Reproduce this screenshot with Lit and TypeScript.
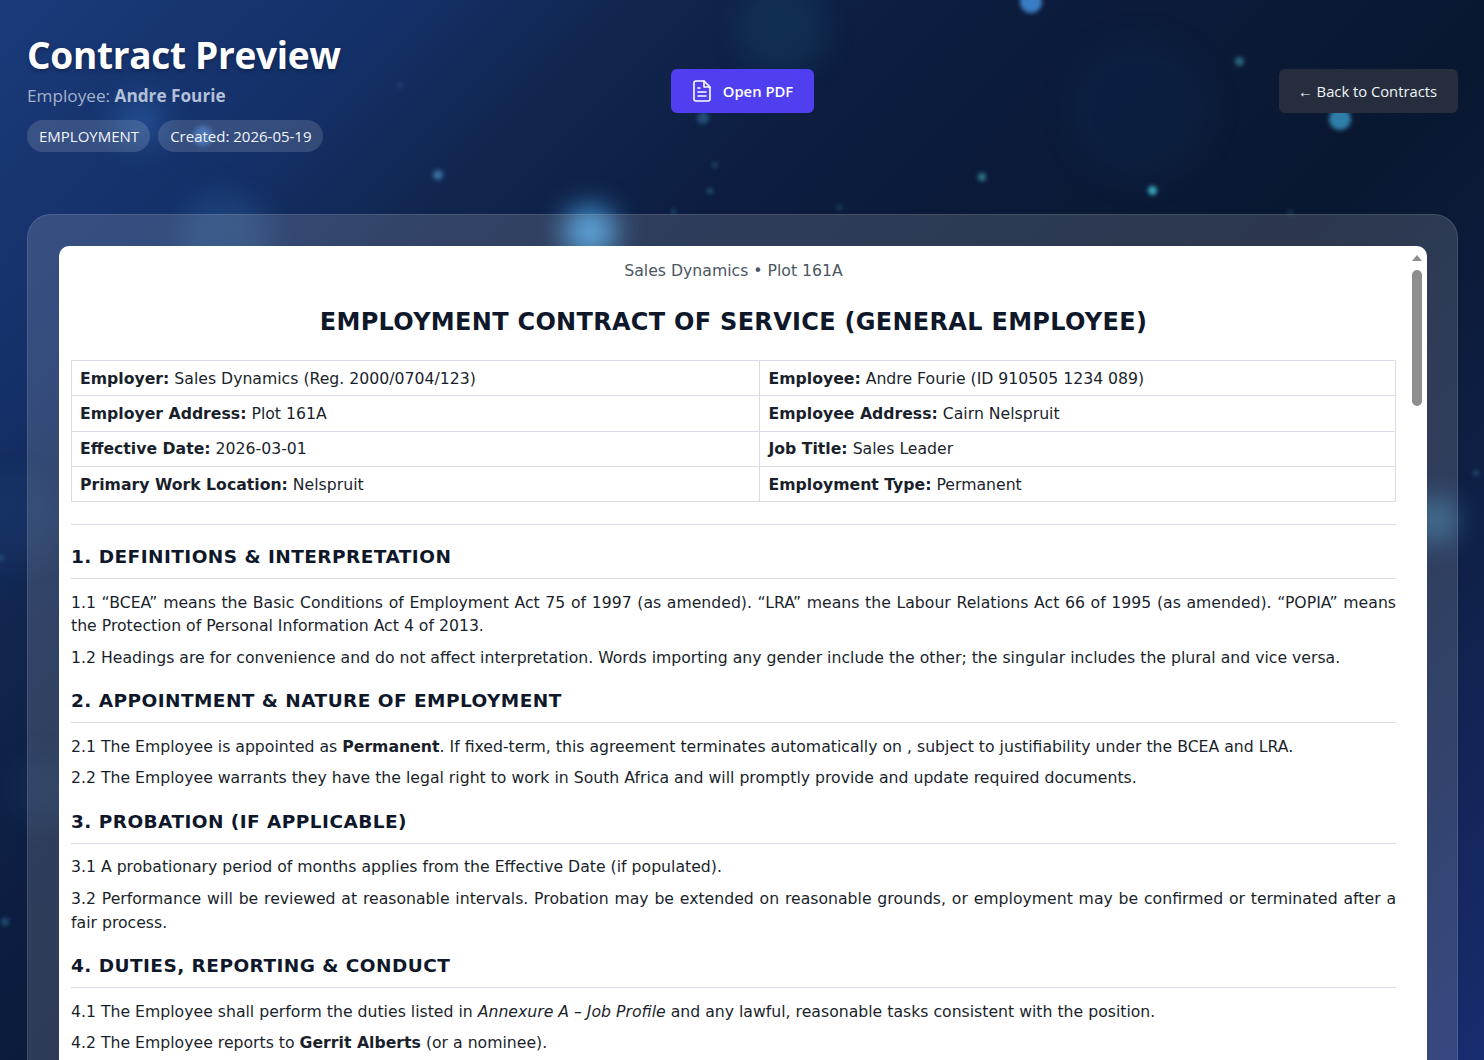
import { LitElement, html, css } from "lit";
import { customElement } from "lit/decorators.js";

const dots: [number, number, number, string][] = [
  [438, 175, 10, "rgba(90,170,220,.55)"], [400, 85, 6, "rgba(90,150,210,.2)"], [1031, 2, 22, "rgba(70,150,230,.8)"],
  [1152, 190, 9, "rgba(70,210,220,.8)"], [982, 177, 8, "rgba(80,200,210,.55)"], [1239, 61, 9, "rgba(70,170,190,.55)"],
  [1340, 119, 22, "rgba(60,160,210,.75)"], [703, 118, 12, "rgba(70,150,200,.4)"], [710, 191, 6, "rgba(70,170,190,.4)"],
  [673, 211, 5, "rgba(70,170,190,.35)"], [715, 165, 6, "rgba(70,170,190,.3)"], [839, 207, 5, "rgba(70,170,190,.3)"],
  [5, 922, 8, "rgba(70,170,210,.35)"], [1, 558, 6, "rgba(70,170,210,.3)"], [1476, 473, 6, "rgba(70,170,210,.3)"],
  [203, 136, 20, "rgba(70,140,230,.5)"], [1290, 212, 5, "rgba(70,170,210,.25)"],
];
const glows: [number, number, number, string][] = [
  [783, 30, 90, "rgba(30,110,140,.17)"], [1140, 110, 150, "rgba(30,90,150,.08)"], [225, 238, 90, "rgba(70,150,210,.18)"],
  [590, 232, 52, "rgba(80,180,250,.8)"], [140, 122, 50, "rgba(60,130,210,.32)"], [1435, 520, 46, "rgba(70,170,220,.42)"],
  [45, 790, 70, "rgba(70,150,210,.08)"], [20, 520, 90, "rgba(60,130,200,.08)"],
];

@customElement("app-root")
export class AppRoot extends LitElement {
  static styles = css`
    :host { display: block; height: 1060px; overflow: hidden; position: relative; font-family: "Open Sans", "Noto Sans", sans-serif;
      background: linear-gradient(135deg, #1b3a7a 0%, #143068 16%, #11264f 25%, #0c1d40 36%, #0a1730 60%, #0f2148 80%, #182c70 100%); }
    .bokeh { position: absolute; inset: 0; pointer-events: none; }
    .dot { position: absolute; border-radius: 50%; filter: blur(2px); }
    .glow { position: absolute; border-radius: 50%; filter: blur(14px); }
    .page { position: relative; display: flex; flex-direction: column; gap: 62px; padding: 30px 26px 0 27px; height: 100%; box-sizing: border-box; }
    header { display: grid; grid-template-columns: 1fr auto 1fr; align-items: flex-start; }
    h1 { margin: 0; font-size: 37px; line-height: 50px; font-weight: 700; color: #fff; letter-spacing: -.3px; text-shadow: 0 2px 4px rgba(0,0,0,.3); }
    .sub { margin-top: 3px; font-size: 17.2px; line-height: 26px; color: #a3b2cb; }
    .sub b { font-weight: 700; color: #b3c0d8; }
    .chips { display: flex; gap: 8px; margin-top: 11px; }
    .chip { height: 32px; box-sizing: border-box; padding: 0 11px 0 12px; border-radius: 16px; background: rgba(255,255,255,.14); color: #f1f5f9; font-size: 15px; line-height: 33px; }
    .pdf { margin-top: 39px; display: flex; align-items: center; gap: 9px; height: 44px; padding: 0 21px 0 19px; border-radius: 6px; background: #4f3ff0; color: #fff; font-size: 14.8px; font-weight: 600; }
    .pdf svg { width: 24px; height: 24px; }
    .back { justify-self: end; margin-top: 39px; height: 44px; display: flex; align-items: center; padding: 0 21px 0 19px; border-radius: 6px; background: #262e3e; color: #f1f5f9; font-size: 14.75px; }
    .panel { flex: 1; min-height: 0; margin-bottom: -40px; box-sizing: border-box; padding: 31px 30px 0 31px; border-radius: 24px 24px 0 0; background: rgba(255,255,255,.14); border: 1px solid rgba(255,255,255,.1); }
    .doc { position: relative; height: 100%; box-sizing: border-box; background: #fff; border-radius: 10px 10px 0 0; padding: 14px 31px 0 12px; overflow: hidden; font-family: "DejaVu Sans", Verdana, sans-serif; color: #1a1f2c; font-size: 15.7px; line-height: 23.55px; }
    .sb { position: absolute; top: 0; right: 0; width: 20px; }
    .arrow { position: absolute; top: 9px; left: 5px; width: 0; height: 0; border: 5px solid transparent; border-top: 0; border-bottom: 6px solid #8e8e8e; }
    .thumb { position: absolute; top: 24px; left: 5px; width: 10px; height: 136px; border-radius: 5px; background: #8e8e8e; }
    .co { text-align: center; color: #4b5563; line-height: 22px; }
    h2 { margin: 24px 0 22px; text-align: center; font-size: 24px; line-height: 32px; letter-spacing: .3px; font-weight: 700; color: #0f172a; }
    table { width: 100%; border-collapse: collapse; table-layout: fixed; }
    td { box-sizing: border-box; border: 1px solid #d9dce5; padding: 0 8px; height: 35.3px; line-height: 23px; }
    td:first-child { width: 52%; }
    b { font-weight: 700; }
    hr { border: 0; border-top: 1px solid #d9dce5; margin: 22px 0 0; }
    h3 { margin: 19px 0 11.5px; padding-bottom: 8px; border-bottom: 1px solid #d9dce5; font-size: 18.5px; line-height: 26px; letter-spacing: .45px; font-weight: 700; color: #0f172a; }
    p { margin: 0 0 8px; text-align: justify; }
  `;

  render() {
    return html`
      <div class="bokeh">
        ${glows.map(([x, y, s, c]) => html`<div class="glow" style="left:${x - s / 2}px;top:${y - s / 2}px;width:${s}px;height:${s}px;background:${c}"></div>`)}
        ${dots.map(([x, y, s, c]) => html`<div class="dot" style="left:${x - s / 2}px;top:${y - s / 2}px;width:${s}px;height:${s}px;background:${c}"></div>`)}
      </div>
      <div class="page">
        <header>
          <div>
            <h1>Contract Preview</h1>
            <div class="sub">Employee: <b>Andre Fourie</b></div>
            <div class="chips"><span class="chip">EMPLOYMENT</span><span class="chip">Created: 2026-05-19</span></div>
          </div>
          <div class="pdf">
            <svg viewBox="0 0 24 24" fill="none" stroke="currentColor" stroke-width="1.6" stroke-linecap="round" stroke-linejoin="round"><path d="M14 2H6a2 2 0 0 0-2 2v16a2 2 0 0 0 2 2h12a2 2 0 0 0 2-2V8z"/><path d="M14 2v6h6"/><path d="M16 13H8M16 17H8M10 9H8"/></svg>
            Open PDF
          </div>
          <div class="back">← Back to Contracts</div>
        </header>
        <section class="panel">
          <div class="doc">
            <div class="sb"><div class="arrow"></div><div class="thumb"></div></div>
            <div class="co">Sales Dynamics • Plot 161A</div>
            <h2>EMPLOYMENT CONTRACT OF SERVICE (GENERAL EMPLOYEE)</h2>
            <table>
              <tr><td><b>Employer:</b> Sales Dynamics (Reg. 2000/0704/123)</td><td><b>Employee:</b> Andre Fourie (ID 910505 1234 089)</td></tr>
              <tr><td><b>Employer Address:</b> Plot 161A</td><td><b>Employee Address:</b> Cairn Nelspruit</td></tr>
              <tr><td><b>Effective Date:</b> 2026-03-01</td><td><b>Job Title:</b> Sales Leader</td></tr>
              <tr><td><b>Primary Work Location:</b> Nelspruit</td><td><b>Employment Type:</b> Permanent</td></tr>
            </table>
            <hr />
            <h3>1. DEFINITIONS &amp; INTERPRETATION</h3>
            <p>1.1 “BCEA” means the Basic Conditions of Employment Act 75 of 1997 (as amended). “LRA” means the Labour Relations Act 66 of 1995 (as amended). “POPIA” means the Protection of Personal Information Act 4 of 2013.</p>
            <p>1.2 Headings are for convenience and do not affect interpretation. Words importing any gender include the other; the singular includes the plural and vice versa.</p>
            <h3>2. APPOINTMENT &amp; NATURE OF EMPLOYMENT</h3>
            <p>2.1 The Employee is appointed as <b>Permanent</b>. If fixed-term, this agreement terminates automatically on , subject to justifiability under the BCEA and LRA.</p>
            <p>2.2 The Employee warrants they have the legal right to work in South Africa and will promptly provide and update required documents.</p>
            <h3>3. PROBATION (IF APPLICABLE)</h3>
            <p>3.1 A probationary period of months applies from the Effective Date (if populated).</p>
            <p>3.2 Performance will be reviewed at reasonable intervals. Probation may be extended on reasonable grounds, or employment may be confirmed or terminated after a fair process.</p>
            <h3>4. DUTIES, REPORTING &amp; CONDUCT</h3>
            <p>4.1 The Employee shall perform the duties listed in <i>Annexure A – Job Profile</i> and any lawful, reasonable tasks consistent with the position.</p>
            <p>4.2 The Employee reports to <b>Gerrit Alberts</b> (or a nominee).</p>
          </div>
        </section>
      </div>
    `;
  }
}
